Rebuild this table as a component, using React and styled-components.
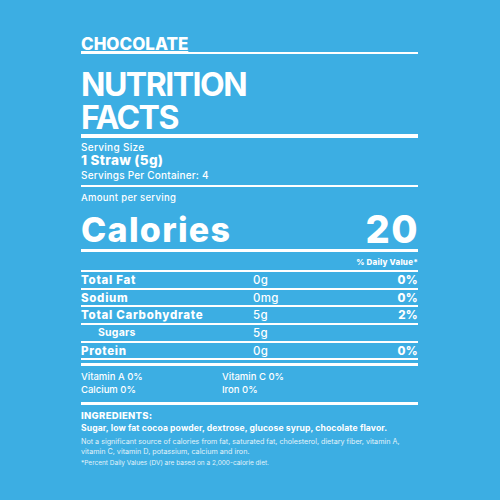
import React from 'react';
import styled, { createGlobalStyle } from 'styled-components';

const Global = createGlobalStyle`
  html, body {
    margin: 0;
    padding: 0;
    background: #3caee3;
  }
  body {
    font-family: Inter, "Noto Sans", sans-serif;
    color: #ffffff;
  }
`;

const Page = styled.div`
  width: 500px;
  height: 500px;
  background: #3caee3;
  display: flex;
  justify-content: center;
`;

const Panel = styled.div`
  width: 337px;
  margin-left: -1px;
  padding-top: 36px;
  display: flex;
  flex-direction: column;
`;

const Flavor = styled.div`
  font-size: 17px;
  font-weight: 800;
  line-height: 16px;
  text-decoration: underline;
  text-decoration-thickness: 2px;
  text-underline-offset: 1px;
  border-bottom: 2px solid #fff;
`;

const Title = styled.h1`
  margin: 14px 0 0;
  font-size: 32px;
  font-weight: 700;
  line-height: 33px;
  letter-spacing: -1.5px;
`;

const Rule = styled.div`
  height: ${(p) => p.$h || 2}px;
  background: #fff;
  margin-top: ${(p) => p.$mt || 0}px;
`;

const Small = styled.div`
  font-size: ${(p) => p.$size || 10}px;
  font-weight: ${(p) => p.$w || 500};
  line-height: ${(p) => p.$lh || 12}px;
  letter-spacing: ${(p) => p.$ls || 0}px;
  opacity: ${(p) => p.$o || 1};
  margin-top: ${(p) => p.$mt || 0}px;
  text-align: ${(p) => p.$align || 'left'};
`;

const Serving = styled.div`
  font-size: 13.5px;
  font-weight: 800;
  line-height: 15px;
  letter-spacing: 0.3px;
`;

const CalRow = styled.div`
  display: flex;
  justify-content: space-between;
  align-items: flex-end;
  margin-top: 8px;
  border-bottom: 3px solid #fff;
  padding-bottom: 3px;
`;

const CalLabel = styled.span`
  font-size: 34px;
  font-weight: 800;
  line-height: 32px;
  letter-spacing: 1.3px;
`;

const CalValue = styled.span`
  font-size: 38px;
  font-weight: 800;
  line-height: 34px;
  letter-spacing: 1.5px;
  margin-right: -1px;
`;

const Row = styled.div`
  box-sizing: border-box;
  display: grid;
  grid-template-columns: 172px 1fr auto;
  align-items: center;
  height: 17.7px;
  border-bottom: 2px solid #fff;
  font-size: 11.5px;
  line-height: 14px;
`;

const Name = styled.span`
  font-weight: ${(p) => (p.$sub ? 700 : 800)};
  padding-left: ${(p) => (p.$sub ? 17 : 0)}px;
  font-size: ${(p) => (p.$sub ? 10.5 : 11.5)}px;
  letter-spacing: ${(p) => (p.$sub ? 0.2 : 0.7)}px;
`;

const Amount = styled.span`
  font-weight: 500;
  letter-spacing: 0.3px;
`;

const Pct = styled.span`
  font-weight: 800;
  letter-spacing: 0.3px;
`;

const Vitamins = styled.div`
  display: grid;
  grid-template-columns: 141px 1fr;
  row-gap: 1px;
  margin-top: 5px;
  padding-bottom: 6px;
  border-bottom: 3px solid #fff;
  font-size: 9.5px;
  font-weight: 500;
  line-height: 12px;
`;

const rows = [
  { name: 'Total Fat', amount: '0g', pct: '0%' },
  { name: 'Sodium', amount: '0mg', pct: '0%' },
  { name: 'Total Carbohydrate', amount: '5g', pct: '2%' },
  { name: 'Sugars', amount: '5g', pct: '', sub: true },
  { name: 'Protein', amount: '0g', pct: '0%' },
];

export default function App() {
  return (
    <Page>
      <Global />
      <Panel>
        <Flavor>CHOCOLATE</Flavor>
        <Title>
          NUTRITION
          <br />
          FACTS
        </Title>
        <Rule $h={4} $mt={0} />
        <Small $mt={3} $ls={0.3}>Serving Size</Small>
        <Serving>1 Straw (5g)</Serving>
        <Small $mt={1} $ls={0.2}>Servings Per Container: 4</Small>
        <Rule $h={2} $mt={4} />
        <Small $mt={5} $size={9.5} $ls={0.3}>Amount per serving</Small>
        <CalRow>
          <CalLabel>Calories</CalLabel>
          <CalValue>20</CalValue>
        </CalRow>
        <Small $size={8} $w={800} $align="right" $mt={5} $lh={10} $ls={0.2}>
          % Daily Value*
        </Small>
        <Rule $h={0} $mt={3} />
        {rows.map((r) => (
          <Row key={r.name}>
            <Name $sub={r.sub}>{r.name}</Name>
            <Amount>{r.amount}</Amount>
            <Pct>{r.pct}</Pct>
          </Row>
        ))}
        <Rule $h={3} $mt={3} />
        <Vitamins>
          <span>Vitamin A 0%</span>
          <span>Vitamin C 0%</span>
          <span>Calcium 0%</span>
          <span>Iron 0%</span>
        </Vitamins>
        <Small $mt={5} $size={9.5} $w={800} $ls={0.3}>INGREDIENTS:</Small>
        <Small $size={8.6} $w={700} $lh={12} $ls={0.1}>
          Sugar, low fat cocoa powder, dextrose, glucose syrup, chocolate flavor.
        </Small>
        <Small $mt={3} $size={7.2} $w={400} $lh={9.5} $o={0.85}>
          Not a significant source of calories from fat, saturated fat, cholesterol, dietary fiber, vitamin A,
          <br />
          vitamin C, vitamin D, potassium, calcium and iron.
        </Small>
        <Small $mt={3} $size={6.5} $w={400} $lh={9} $o={0.85}>
          *Percent Daily Values (DV) are based on a 2,000-calorie diet.
        </Small>
      </Panel>
    </Page>
  );
}
